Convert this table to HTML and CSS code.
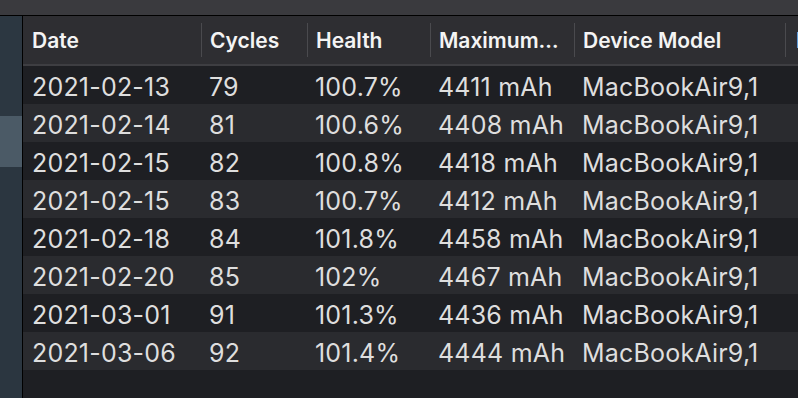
FILE: index.html
```html
<!DOCTYPE html>
<html>
<head>
<meta charset="utf-8">
<link rel="stylesheet" href="styles.css">
</head>
<body>
<div class="window">
  <div class="topbar"></div>
  <div class="main">
    <div class="sidebar">
      <div class="side-top"></div>
      <div class="side-sel"></div>
      <div class="side-rest"></div>
    </div>
    <div class="table">
      <div class="head">
        <div class="hcell first"><span class="label">Date</span></div>
        <div class="hcell"><span class="sep"></span><span class="label">Cycles</span></div>
        <div class="hcell"><span class="sep"></span><span class="label">Health</span></div>
        <div class="hcell"><span class="sep"></span><span class="label">Maximum…</span></div>
        <div class="hcell"><span class="sep"></span><span class="label">Device Model</span></div>
        <div class="hcell last"><span class="sep"></span><span class="label">Ma</span></div>
      </div>
      <div class="row odd"><span class="c first">2021-02-13</span><span class="c">79</span><span class="c">100.7%</span><span class="c">4411 mAh</span><span class="c">MacBookAir9,1</span><span class="c"></span></div>
      <div class="row even"><span class="c first">2021-02-14</span><span class="c">81</span><span class="c">100.6%</span><span class="c">4408 mAh</span><span class="c">MacBookAir9,1</span><span class="c"></span></div>
      <div class="row odd"><span class="c first">2021-02-15</span><span class="c">82</span><span class="c">100.8%</span><span class="c">4418 mAh</span><span class="c">MacBookAir9,1</span><span class="c"></span></div>
      <div class="row even"><span class="c first">2021-02-15</span><span class="c">83</span><span class="c">100.7%</span><span class="c">4412 mAh</span><span class="c">MacBookAir9,1</span><span class="c"></span></div>
      <div class="row odd"><span class="c first">2021-02-18</span><span class="c">84</span><span class="c">101.8%</span><span class="c">4458 mAh</span><span class="c">MacBookAir9,1</span><span class="c"></span></div>
      <div class="row even"><span class="c first">2021-02-20</span><span class="c">85</span><span class="c">102%</span><span class="c">4467 mAh</span><span class="c">MacBookAir9,1</span><span class="c"></span></div>
      <div class="row odd"><span class="c first">2021-03-01</span><span class="c">91</span><span class="c">101.3%</span><span class="c">4436 mAh</span><span class="c">MacBookAir9,1</span><span class="c"></span></div>
      <div class="row even"><span class="c first">2021-03-06</span><span class="c">92</span><span class="c">101.4%</span><span class="c">4444 mAh</span><span class="c">MacBookAir9,1</span><span class="c"></span></div>
    </div>
  </div>
</div>
</body>
</html>
```
FILE: styles.css
```css
html, body {
  margin: 0;
  padding: 0;
  background: #1e1f23;
}
.window {
  width: 798px;
  height: 398px;
  display: flex;
  flex-direction: column;
  overflow: hidden;
  font-family: Inter, "Noto Sans", sans-serif;
}
.topbar {
  height: 15px;
  background: #3a3a3e;
  border-bottom: 1px solid #000;
  flex: none;
}
.main {
  flex: 1;
  display: flex;
  min-height: 0;
}
.sidebar {
  width: 22px;
  flex: none;
  border-right: 1px solid #000;
  display: flex;
  flex-direction: column;
  background: #2b3640;
}
.side-top {
  height: 100px;
  background: #2c3741;
}
.side-sel {
  height: 51px;
  background: #4b5a66;
}
.side-rest {
  flex: 1;
  background: #2b3640;
}
.table {
  flex: 1;
  min-width: 0;
  background: #1e1f23;
  overflow: hidden;
}
.head, .row {
  display: grid;
  grid-template-columns: 178px 106px 123px 144px 211px 1fr;
}
.head {
  height: 50px;
  box-sizing: border-box;
  background: #2e2e32;
  border-bottom: 2px solid #3e3e42;
}
.hcell {
  display: flex;
  align-items: center;
  overflow: hidden;
  white-space: nowrap;
}
.hcell.first {
  padding-left: 9px;
}
.sep {
  width: 1px;
  height: 34px;
  background: #4a4a4e;
  margin-right: 8px;
  flex: none;
}
.hcell.last .sep {
  margin-right: 10px;
}
.label {
  color: #f4f4f4;
  font-size: 21px;
  font-weight: 600;
}
.row {
  height: 38px;
  align-items: center;
}
.row.odd { background: #1e1f23; }
.row.even { background: #2a2b2f; }
.c {
  padding-left: 8px;
  padding-top: 4px;
  color: #dedede;
  font-size: 25px;
  letter-spacing: 0.2px;
  white-space: nowrap;
  overflow: hidden;
}
.c.first {
  padding-left: 9px;
}
```
